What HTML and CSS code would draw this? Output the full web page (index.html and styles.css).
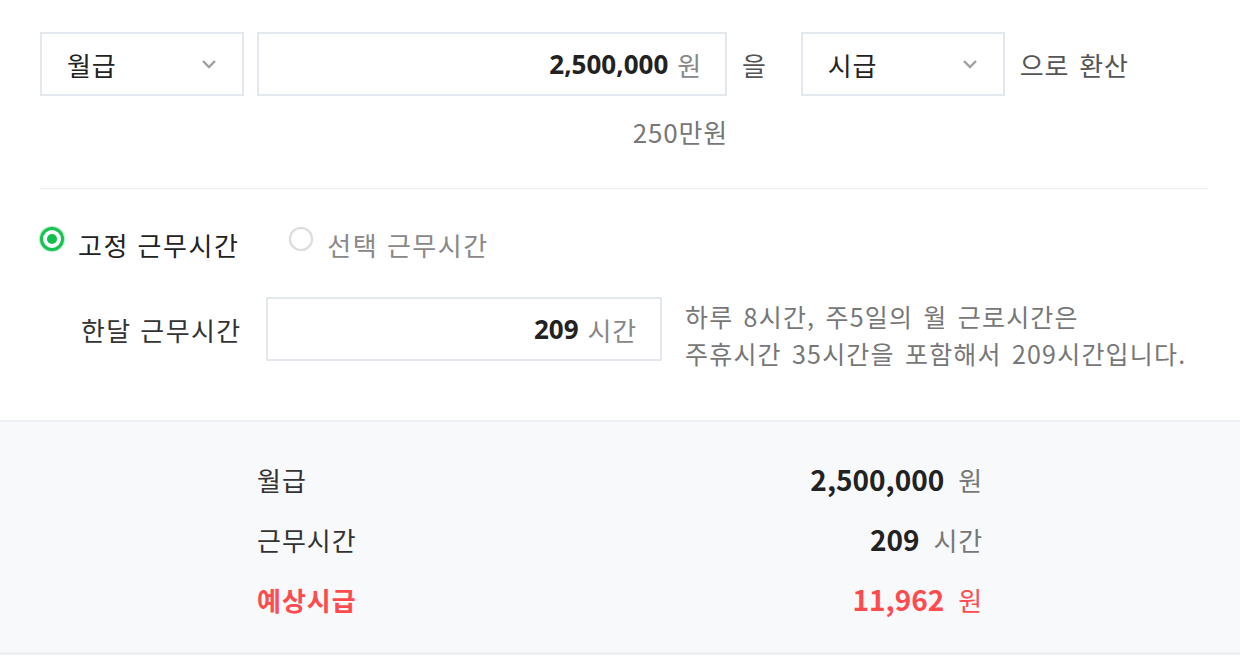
FILE: index.html
```html
<!DOCTYPE html>
<html lang="ko">
<head>
<meta charset="utf-8">
<link rel="stylesheet" href="styles.css">
</head>
<body>
<div class="calc">
  <div class="top">
    <div class="conv-row">
      <div class="select sel-from">
        <span>월급</span>
        <svg class="chev" width="16" height="10" viewBox="0 0 16 10"><path d="M2 2 L8 8 L14 2" fill="none" stroke="#a0a0a0" stroke-width="2.4"/></svg>
      </div>
      <div class="amount">
        <span class="num">2,500,000</span><span class="unit">원</span>
      </div>
      <span class="particle">을</span>
      <div class="select sel-to">
        <span>시급</span>
        <svg class="chev" width="16" height="10" viewBox="0 0 16 10"><path d="M2 2 L8 8 L14 2" fill="none" stroke="#a0a0a0" stroke-width="2.4"/></svg>
      </div>
      <span class="suffix">으로 환산</span>
    </div>
    <div class="hint-row"><span class="hint">250만원</span></div>
  </div>
  <div class="divider"></div>
  <div class="radios">
    <label class="radio checked"><span class="dot"></span><span class="rlabel">고정 근무시간</span></label>
    <label class="radio"><span class="dot"></span><span class="rlabel">선택 근무시간</span></label>
  </div>
  <div class="hours-row">
    <span class="hours-label">한달 근무시간</span>
    <div class="hours-input"><span class="num">209</span><span class="unit">시간</span></div>
    <p class="help">하루 8시간, 주5일의 월 근로시간은<br>주휴시간 35시간을 포함해서 209시간입니다.</p>
  </div>
  <div class="result">
    <div class="result-inner">
      <div class="rrow"><span class="rl">월급</span><span class="rv"><b>2,500,000</b><span class="ru">원</span></span></div>
      <div class="rrow"><span class="rl">근무시간</span><span class="rv"><b>209</b><span class="ru">시간</span></span></div>
      <div class="rrow red"><span class="rl">예상시급</span><span class="rv"><b>11,962</b><span class="ru">원</span></span></div>
    </div>
  </div>
</div>
</body>
</html>
```
FILE: styles.css
```css
* { box-sizing: border-box; }
html, body { margin: 0; padding: 0; background: #fff; }
body {
  font-family: "Noto Sans CJK KR", "Noto Sans", sans-serif;
  color: #222;
  width: 1240px;
  height: 668px;
  overflow: hidden;
  letter-spacing: 0.8px;
}
.top { padding: 32px 32px 0 40px; }
.conv-row { display: flex; align-items: center; height: 64px; }
.select {
  width: 204px;
  height: 64px;
  border: 2px solid #e3e7ee;
  display: flex;
  align-items: center;
  justify-content: space-between;
  padding: 0 25px 0 25px;
  font-size: 26px;
  color: #222;
}
.chev { display: block; }
.amount {
  margin-left: 13px;
  width: 470px;
  height: 64px;
  border: 2px solid #e3e7ee;
  display: flex;
  align-items: center;
  justify-content: flex-end;
  padding-right: 23px;
}
.num { font-weight: 700; font-size: 26px; color: #222; font-family: "Noto Sans", "Noto Sans CJK KR", sans-serif; letter-spacing: 0; }
.unit { font-size: 26px; color: #888; margin-left: 9px; }
.particle { font-size: 26px; color: #555; margin: 0 34px 0 15px; }
.suffix { font-size: 26px; color: #555; margin-left: 15px; word-spacing: 2px; }
.hint-row { display: flex; justify-content: flex-end; width: 688px; margin-top: 18px; }
.hint { font-size: 26px; color: #777; line-height: 36px; }
.divider { height: 1px; background: #ececec; margin: 38px 32px 0 40px; }
.radios { display: flex; align-items: center; margin: 35px 0 0 40px; height: 40px; }
.radio { display: flex; align-items: center; margin-right: 50px; }
.dot {
  width: 24px; height: 24px; border-radius: 50%;
  border: 2px solid #ddd;
  box-shadow: 0 0 1px rgba(0,0,0,0.1);
  background: #fff;
  position: relative;
  margin-top: -10px;
  flex: none;
}
.radio.checked .dot { border: 3px solid #16c351; box-shadow: 0 0 1px 1px rgba(22,195,81,0.35); }
.radio.checked .dot::after {
  content: ""; position: absolute; left: 4px; top: 4px;
  width: 10px; height: 10px; border-radius: 50%; background: #10c04a;
}
.rlabel { font-size: 26px; margin-left: 14px; color: #222; letter-spacing: 1.5px; }
.radio:not(.checked) .rlabel { color: #888; }
.hours-row { display: flex; align-items: center; margin: 33px 0 0 81px; height: 64px; }
.hours-label { font-size: 26px; color: #333; width: 185px; letter-spacing: 1.4px; }
.hours-input {
  width: 396px; height: 64px;
  border: 2px solid #e3e7ee;
  display: flex; align-items: center; justify-content: flex-end;
  padding-right: 23px;
}
.help { margin: 12px 0 0 23px; font-size: 25px; line-height: 37px; color: #777; letter-spacing: 1.2px; word-spacing: 2px; }
.result {
  margin-top: 59px;
  background: #f8f9fb;
  border-top: 2px solid #eef0f4;
  border-bottom: 3px solid #eef0f4;
  height: 235px;
  padding-top: 27px;
}
.result-inner { width: 726px; margin: 0 auto; }
.rrow { display: flex; justify-content: space-between; align-items: center; height: 60px; }
.rl { font-size: 26px; color: #333; letter-spacing: 1px; }
.rv { display: flex; align-items: baseline; }
.rv b { font-size: 28px; font-weight: 700; color: #222; font-family: "Noto Sans CJK KR", "Noto Sans", sans-serif; letter-spacing: 0; }
.ru { font-size: 26px; color: #777; margin-left: 14px; }
.rrow.red .rl { color: #ff4b4e; font-weight: 700; }
.rrow.red b { color: #ff4b4e; }
.rrow.red .ru { color: #ff4b4e; }
```
